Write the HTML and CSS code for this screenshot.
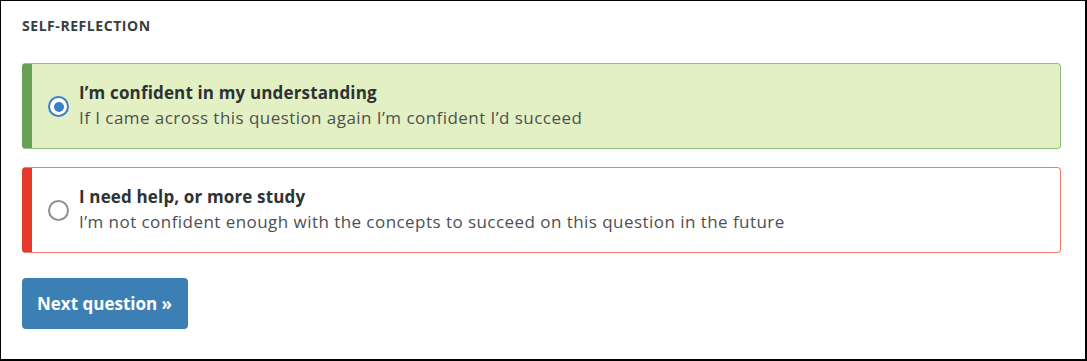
FILE: index.html
```html
<!DOCTYPE html>
<html>
<head>
<meta charset="utf-8">
<link rel="stylesheet" href="styles.css">
</head>
<body>
<div class="frame">
  <h2 class="heading">SELF-REFLECTION</h2>
  <div class="options">
    <label class="option option--good">
      <span class="radio radio--checked"><span class="dot"></span></span>
      <span class="text">
        <span class="title">I’m confident in my understanding</span>
        <span class="desc">If I came across this question again I’m confident I’d succeed</span>
      </span>
    </label>
    <label class="option option--bad">
      <span class="radio"></span>
      <span class="text">
        <span class="title">I need help, or more study</span>
        <span class="desc">I’m not confident enough with the concepts to succeed on this question in the future</span>
      </span>
    </label>
  </div>
  <button class="btn">Next question »</button>
</div>
</body>
</html>
```
FILE: styles.css
```css
html, body {
  margin: 0;
  padding: 0;
  background: #fff;
}
.frame {
  box-sizing: border-box;
  width: 1087px;
  height: 361px;
  border-style: solid;
  border-color: #000;
  border-width: 1px 2px 2px 1px;
  padding: 16px 24px 0 21px;
  font-family: "Open Sans", "Liberation Sans", sans-serif;
  color: #333;
}
.heading {
  margin: 0;
  font-size: 14px;
  line-height: 18px;
  font-weight: 700;
  color: #3a3d40;
  letter-spacing: 0.55px;
}
.options {
  margin-top: 28px;
  display: flex;
  flex-direction: column;
  gap: 18px;
}
.option {
  box-sizing: border-box;
  height: 86px;
  display: flex;
  align-items: center;
  border: 1px solid;
  border-left-width: 10px;
  border-radius: 4px;
  padding-left: 16px;
}
.option--good {
  background: #e3f0c3;
  border-color: #93bd7e;
  border-left-color: #67a053;
}
.option--bad {
  background: #fff;
  border-color: #f07a6e;
  border-left-color: #e5392b;
}
.radio {
  box-sizing: border-box;
  flex: 0 0 auto;
  width: 21px;
  height: 21px;
  border-radius: 50%;
  border: 2px solid #8f8f8f;
  background: #fff;
  display: flex;
  align-items: center;
  justify-content: center;
  margin-right: 10px;
  margin-top: 1px;
}
.radio--checked {
  border-color: #3b7fc0;
}
.dot {
  width: 10px;
  height: 10px;
  border-radius: 50%;
  background: #3b7fc0;
}
.text {
  display: flex;
  flex-direction: column;
  padding-bottom: 3px;
}
.title {
  font-size: 17px;
  line-height: 25px;
  font-weight: 700;
  color: #2f3235;
  letter-spacing: 0.15px;
}
.desc {
  font-size: 17px;
  line-height: 25px;
  color: #4d5053;
  letter-spacing: 0.45px;
}
.btn {
  margin-top: 25px;
  width: 166px;
  height: 51px;
  border: none;
  border-radius: 4px;
  background: #3b7fb4;
  color: #fff;
  font-family: "Open Sans", "Liberation Sans", sans-serif;
  font-size: 17px;
  font-weight: 700;
  padding: 0 1px 0 0;
  cursor: pointer;
}
```
